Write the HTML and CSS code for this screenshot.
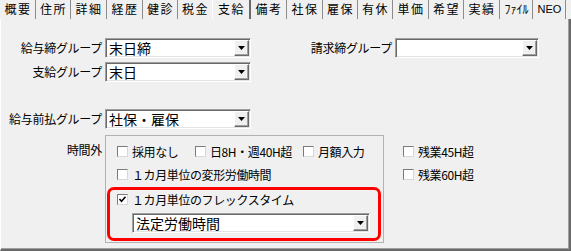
FILE: index.html
```html
<!DOCTYPE html>
<html lang="ja">
<head>
<meta charset="utf-8">
<link rel="stylesheet" href="styles.css">
</head>
<body>
<div class="window">
  <div class="tabs">
    <div class="tab w36">概要</div>
    <div class="tab w35">住所</div>
    <div class="tab w36">詳細</div>
    <div class="tab w36">経歴</div>
    <div class="tab w35">健診</div>
    <div class="tab w35">税金</div>
    <div class="tab w38 active">支給</div>
    <div class="tab w36">備考</div>
    <div class="tab w36">社保</div>
    <div class="tab w35">雇保</div>
    <div class="tab w35">有休</div>
    <div class="tab w36">単価</div>
    <div class="tab w35">希望</div>
    <div class="tab w36">実績</div>
    <div class="tab w33 half">ﾌｧｲﾙ</div>
    <div class="tab w33 neo">NEO</div>
  </div>
  <div class="panel">
    <div class="row r1">
      <div class="lbl">給与締グループ</div>
      <div class="combo cw146"><span class="ctext">末日締</span><span class="cbtn"><svg width="7" height="4" viewBox="0 0 7 4"><polygon points="0,0 7,0 3.5,4" fill="#000"/></svg></span></div>
      <div class="lbl lbl2">請求締グループ</div>
      <div class="combo cw144"><span class="ctext"></span><span class="cbtn"><svg width="7" height="4" viewBox="0 0 7 4"><polygon points="0,0 7,0 3.5,4" fill="#000"/></svg></span></div>
    </div>
    <div class="row r2">
      <div class="lbl">支給グループ</div>
      <div class="combo cw146"><span class="ctext">末日</span><span class="cbtn"><svg width="7" height="4" viewBox="0 0 7 4"><polygon points="0,0 7,0 3.5,4" fill="#000"/></svg></span></div>
    </div>
    <div class="row r3">
      <div class="lbl">給与前払グループ</div>
      <div class="combo cw146"><span class="ctext">社保・雇保</span><span class="cbtn"><svg width="7" height="4" viewBox="0 0 7 4"><polygon points="0,0 7,0 3.5,4" fill="#000"/></svg></span></div>
    </div>
    <div class="row r4">
      <div class="lbl lbl-top">時間外</div>
      <div class="group">
        <div class="cbrow">
          <div class="item iw78"><span class="cb"></span><span class="ct">採用なし</span></div>
          <div class="item iw108"><span class="cb"></span><span class="ct">日8H・週40H超</span></div>
          <div class="item"><span class="cb"></span><span class="ct">月額入力</span></div>
        </div>
        <div class="cbrow">
          <div class="item"><span class="cb"></span><span class="ct">１カ月単位の変形労働時間</span></div>
        </div>
        <div class="flexbox">
          <div class="item frow"><span class="cb"><svg width="9" height="9" viewBox="0 0 9 9"><path d="M1.5 4 L3.5 6.2 L7.5 1.8" fill="none" stroke="#000" stroke-width="1.6"/></svg></span><span class="ct">１カ月単位のフレックスタイム</span></div>
          <div class="combo cw238"><span class="ctext">法定労働時間</span><span class="cbtn"><svg width="7" height="4" viewBox="0 0 7 4"><polygon points="0,0 7,0 3.5,4" fill="#000"/></svg></span></div>
        </div>
      </div>
      <div class="side">
        <div class="cbrow"><div class="item"><span class="cb"></span><span class="ct">残業45H超</span></div></div>
        <div class="cbrow"><div class="item"><span class="cb"></span><span class="ct">残業60H超</span></div></div>
      </div>
    </div>
  </div>
</div>
</body>
</html>
```
FILE: styles.css
```css
* { box-sizing: border-box; }
body {
  margin: 0;
  background: #f0f0f0;
  font-family: "Noto Sans CJK JP", "Noto Sans", sans-serif;
  color: #000;
}
.window {
  width: 571px;
  height: 251px;
  overflow: hidden;
  background: #f0f0f0;
}
.tabs {
  display: flex;
  height: 19px;
}
.tab {
  flex: none;
  height: 19px;
  border-right: 1px solid #8c8c8c;
  font-size: 12px;
  line-height: 18px;
  letter-spacing: 1.5px;
  padding-left: 1px;
  text-align: center;
  white-space: nowrap;
}
.tab.active {
  border-left: 1px solid #ffffff;
  border-right: 2px solid #6a6a6a;
  margin-left: -1px;
}
.tab.half { letter-spacing: 0; font-size: 12px; }
.tab.neo { letter-spacing: 0; font-family: "Liberation Sans", sans-serif; font-size: 11px; }
.w33 { width: 33px; }
.w35 { width: 35px; }
.w36 { width: 36px; }
.w38 { width: 39px; }

.panel {
  width: 571px;
  height: 232px;
  border-left: 1px solid #ffffff;
  border-right: 2px solid #6a6a6a;
  border-bottom: 2px solid #6a6a6a;
  box-shadow: inset -1px -1px 0 #a0a0a0;
  padding-top: 19px;
}
.row {
  display: flex;
  align-items: flex-start;
}
.r2 { margin-top: 4px; }
.r3 { margin-top: 27px; }
.r4 { margin-top: 6px; }

.lbl {
  flex: none;
  width: 104px;
  padding-right: 3px;
  text-align: right;
  font-size: 12px;
  line-height: 20px;
  white-space: nowrap;
  letter-spacing: -0.3px;
}
.lbl2 { width: 144px; }
.lbl-top { margin-top: 5px; }

.combo {
  flex: none;
  display: flex;
  height: 20px;
  background: #ffffff;
  border: 1px solid;
  border-color: #a0a0a0 #ffffff #ffffff #a0a0a0;
  box-shadow: inset 1px 1px 0 #696969, inset -1px -1px 0 #e3e3e3;
  padding: 1px;
}
.cw146 { width: 146px; }
.cw144 { width: 144px; }
.cw238 { width: 238px; }
.ctext {
  flex: 1;
  padding-left: 2px;
  font-size: 14px;
  line-height: 16px;
  white-space: nowrap;
}
.cbtn {
  flex: none;
  width: 15px;
  height: 16px;
  background: #f0f0f0;
  border-top: 1px solid #ffffff;
  border-left: 1px solid #ffffff;
  border-right: 1px solid #696969;
  border-bottom: 1px solid #696969;
  box-shadow: inset -1px -1px 0 #a0a0a0;
  display: flex;
  align-items: center;
  justify-content: center;
  padding-bottom: 1px;
}
.cbtn svg { display: block; }

.group {
  flex: none;
  width: 279px;
  height: 108px;
  border: 1px solid #b2b2b2;
  padding-top: 4px;
}
.cbrow {
  display: flex;
  height: 23px;
  align-items: center;
  padding-left: 11px;
}
.item {
  flex: none;
  display: flex;
  align-items: center;
  gap: 4px;
}
.iw78 { width: 78px; }
.iw108 { width: 108px; }
.cb {
  flex: none;
  width: 11px;
  height: 11px;
  background: #ffffff;
  border: 1px solid;
  border-color: #7a7a7a #d8d8d8 #d8d8d8 #7a7a7a;
  display: flex;
  align-items: center;
  justify-content: center;
}
.cb svg { display: block; }
.ct {
  font-size: 12px;
  line-height: 14px;
  white-space: nowrap;
  letter-spacing: -0.4px;
}
.flexbox {
  margin-top: 1px;
  margin-left: 1px;
  width: 274px;
  height: 54px;
  border: 3px solid #ff0000;
  border-radius: 7px;
  padding: 1px 0 0 7px;
}
.frow { height: 17px; }
.flexbox .combo { margin-top: 5px; margin-left: 15px; }

.side {
  flex: none;
  margin-left: 19px;
  padding-top: 5px;
}
.side .cbrow { padding-left: 0; }
```
